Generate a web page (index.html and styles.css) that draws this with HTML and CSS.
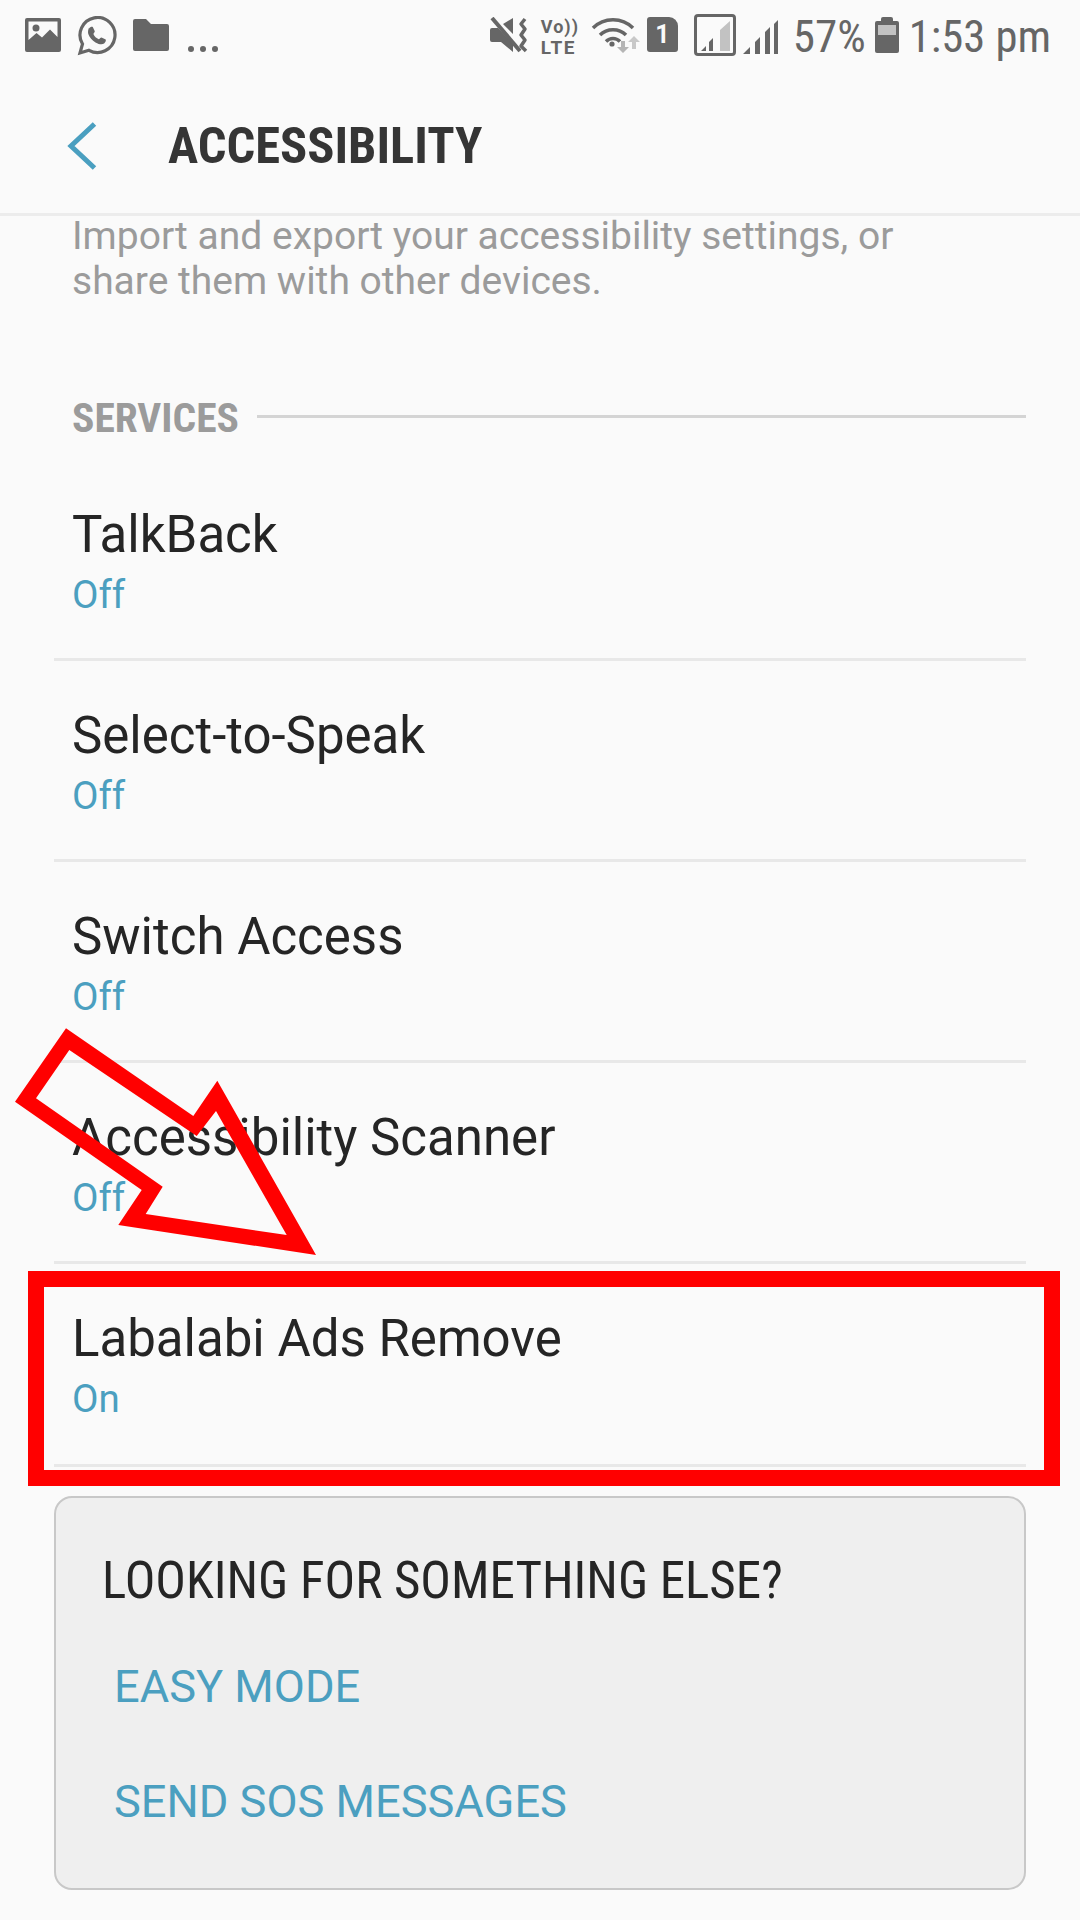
FILE: index.html
```html
<!DOCTYPE html>
<html lang="en">
<head>
  <meta charset="UTF-8">
  <meta name="viewport" content="width=device-width, initial-scale=1.0">
  <title>Accessibility</title>
  <link rel="stylesheet" href="styles.css">
</head>
<body>
  <div class="phone">

    <!-- Status bar -->
    <div class="status-bar">
      <div class="status-left">
        <svg class="ic-image" width="36" height="34" viewBox="0 0 36 34">
          <path fill="#666" fill-rule="evenodd" d="M2 0h32a2 2 0 0 1 2 2v30a2 2 0 0 1-2 2H2a2 2 0 0 1-2-2V2a2 2 0 0 1 2-2zM3.500 3.500V22l8-7 5.500 4.500 8-8 7.500 7.500V3.500z"/>
          <circle cx="11" cy="10" r="3.500" fill="#666"/>
        </svg>
        <svg class="ic-whatsapp" width="40" height="40" viewBox="0 0 40 40">
          <path fill="none" stroke="#666" stroke-width="3.200" d="M3 37l2.500-9A17.500 17.500 0 1 1 12 34.300z"/>
          <path fill="#666" d="M12 12.500c1-1.600 2.800-2.200 3.800-1.600l2 4.300c.2.600-1.400 2.300-1.400 2.800 1 2.300 3 4.300 5.400 5.300.6 0 2-1.900 2.700-1.700l4.200 2c.6.800-.3 3-1.600 3.900-2 1.300-5 .9-8.600-1.100-3.300-2-6-5-7.200-8.400-.6-2-.2-4.400.7-6.300z"/>
        </svg>
        <svg class="ic-folder" width="36" height="32" viewBox="0 0 36 32">
          <path fill="#666" d="M2 0h11l5 5h16a2 2 0 0 1 2 2v23a2 2 0 0 1-2 2H2a2 2 0 0 1-2-2V2a2 2 0 0 1 2-2z"/>
        </svg>
        <div class="more-dots"><span></span><span></span><span></span></div>
      </div>
      <div class="status-right">
        <svg class="ic-mute" width="38" height="36" viewBox="0 0 38 36">
          <path fill="#666" d="M0 13a2 2 0 0 1 2-2h6l15 16v8L11 25H2a2 2 0 0 1-2-2zM13 7l10-6v16z"/>
          <path fill="none" stroke="#666" stroke-width="4" d="M2 1l28 33"/>
          <path fill="none" stroke="#666" stroke-width="3.500" stroke-linejoin="round" d="M35 2l-4 5 4 5-4 6 4 5-4 6 5 5"/>
        </svg>
        <div class="volte"><span class="volte-top">Vo))</span><span class="volte-bottom">LTE</span></div>
        <svg class="ic-wifi" width="50" height="38" viewBox="0 0 50 38">
          <g fill="none" stroke="#666" stroke-width="3.500">
            <path d="M2 11c11-11 29-11 40 0"/>
            <path d="M9 18c7-7 19-7 26 0"/>
            <path d="M15 24.500c4-4 10-4 14 0"/>
          </g>
          <circle cx="21" cy="27" r="2.600" fill="#666"/>
          <path fill="#b5b5b5" d="M30 24h4v6h4l-6 6-6-6h4z"/>
          <path fill="#c8c8c8" d="M43 19l6 6h-4v7h-4v-7h-4z"/>
        </svg>
        <div class="sim-card">1</div>
        <svg class="ic-signal-box" width="42" height="42" viewBox="0 0 42 42">
          <rect x="1.500" y="1.500" width="39" height="39" rx="2.500" fill="none" stroke="#666" stroke-width="3"/>
          <path fill="#c2c2c2" d="M26 16L36 7v30H26z"/>
          <path fill="#666" d="M7 37l5-5v5zM15 37v-9l4-4v13z"/>
        </svg>
        <svg class="ic-signal" width="36" height="36" viewBox="0 0 36 36">
          <path fill="#666" d="M0 36l7-7v7zM12 36V24l5-5v17zM22 36V14l5-5v27zM31 36V6l4-4v34z"/>
        </svg>
        <span class="battery-text">57%</span>
        <div class="battery"><div class="battery-top"></div></div>
        <span class="clock">1:53 pm</span>
      </div>
    </div>

    <!-- App bar -->
    <div class="app-bar">
      <svg class="back-arrow" width="30" height="48" viewBox="0 0 30 48">
        <path fill="none" stroke="#4a9fc0" stroke-width="5" d="M27.500 2L4 24l23.500 22"/>
      </svg>
      <h1 class="app-title">ACCESSIBILITY</h1>
    </div>

    <!-- Scrolling content -->
    <div class="content">
      <p class="intro">Import and export your accessibility settings, or<br>share them with other devices.</p>

      <div class="section-head">
        <span>SERVICES</span>
        <div class="section-line"></div>
      </div>

      <div class="service-list">
        <div class="service-row">
          <div class="service-name">TalkBack</div>
          <div class="service-state">Off</div>
        </div>
        <div class="service-row">
          <div class="service-name">Select-to-Speak</div>
          <div class="service-state">Off</div>
        </div>
        <div class="service-row">
          <div class="service-name">Switch Access</div>
          <div class="service-state">Off</div>
        </div>
        <div class="service-row">
          <div class="service-name">Accessibility Scanner</div>
          <div class="service-state">Off</div>
        </div>
        <div class="service-row service-row-last">
          <div class="service-name">Labalabi Ads Remove</div>
          <div class="service-state">On</div>
        </div>
      </div>

      <div class="else-card">
        <div class="else-title">LOOKING FOR SOMETHING ELSE?</div>
        <a class="else-link">EASY MODE</a>
        <a class="else-link else-link-next">SEND SOS MESSAGES</a>
      </div>
    </div>

    <!-- Red annotations on top of the screenshot -->
    <svg class="note-arrow" width="330" height="240" viewBox="0 1020 330 240">
      <path fill="#f00" fill-rule="evenodd" d="M66 1028.300L193.300 1116 217.300 1080.700 316 1255 118.300 1225 141.700 1190 15 1101.700zM69.300 1050L36 1098.300 162.700 1186.700 145.700 1214 286.700 1235 216 1111 196.700 1136z"/>
    </svg>
    <div class="note-box"></div>
  </div>
</body>
</html>
```

FILE: styles.css
```css
/* Basic styling */
html, body {
  margin: 0;
  padding: 0;
}

body {
  font-family: Roboto, "Liberation Sans", sans-serif;
  background-color: #fafafa;
  color: #252525;
}

.phone {
  position: relative;
  width: 1080px;
  height: 1920px;
  overflow: hidden;
  background-color: #fafafa;
}

/* Status bar */
.status-bar {
  height: 72px;
  display: flex;
  justify-content: space-between;
  color: #666;
}

.status-left {
  display: flex;
  align-items: flex-start;
  padding: 16px 0 0 25px;
}

.ic-image {
  margin-top: 2px;
}

.ic-whatsapp {
  margin-left: 16px;
}

.ic-folder {
  margin: 3px 0 0 16px;
}

.more-dots {
  display: flex;
  gap: 6px;
  margin: 30px 0 0 19px;
}

.more-dots span {
  width: 6px;
  height: 6px;
  border-radius: 50%;
  background-color: #666;
}

.status-right {
  display: flex;
  align-items: flex-start;
  padding: 14px 29px 0 0;
}

.ic-mute {
  margin-top: 3px;
}

.volte {
  display: flex;
  flex-direction: column;
  margin: 2px 0 0 13px;
  width: 36px;
  font-weight: 700;
}

.volte-top {
  font-size: 18px;
  line-height: 21px;
  letter-spacing: 1px;
}

.volte-bottom {
  font-size: 19px;
  line-height: 21px;
  letter-spacing: 1.500px;
}

.ic-wifi {
  margin: 3px 0 0 14px;
}

.sim-card {
  width: 31px;
  height: 35px;
  margin: 3px 0 0 6px;
  border-radius: 3px 9px 3px 3px;
  background-color: #666;
  color: #fafafa;
  font-size: 25px;
  font-weight: 700;
  line-height: 35px;
  text-align: center;
}

.ic-signal-box {
  margin-left: 16px;
}

.ic-signal {
  margin: 4px 0 0 7px;
}

.battery-text {
  margin: 1px 0 0 14px;
  font-size: 45px;
  line-height: 44px;
  font-stretch: 75%;
}

.battery {
  position: relative;
  width: 24px;
  height: 32px;
  margin: 7px 0 0 9px;
  border-radius: 2px;
  background-color: #666;
  padding: 4px 3px 0;
  box-sizing: border-box;
}

/* nub of the battery */
.battery::before {
  content: "";
  position: absolute;
  left: 6px;
  top: -4px;
  width: 12px;
  height: 4px;
  border-radius: 2px 2px 0 0;
  background-color: #666;
}

.battery-top {
  height: 10px;
  background-color: #c2c2c2;
}

.clock {
  margin: 1px 0 0 10px;
  font-size: 44.600px;
  line-height: 44px;
  font-stretch: 75%;
}

/* App bar */
.app-bar {
  height: 144px;
  box-sizing: border-box;
  display: flex;
  align-items: center;
  padding: 6px 0 0 67px;
  border-bottom: 3px solid #ececec;
}

.back-arrow {
  flex: none;
}

.app-title {
  margin: 0 0 0 71px;
  font-size: 50.5px;
  font-weight: 700;
  font-stretch: 75%;
  color: #353535;
}

/* Content */
.content {
  padding: 0 54px;
}

.intro {
  margin: -2px 0 0;
  padding-left: 18px;
  font-size: 39px;
  line-height: 45px;
  color: #9b9b9b;
}

.section-head {
  display: flex;
  align-items: center;
  margin: 89px 0 18px;
  padding-left: 18px;
  font-size: 41.500px;
  font-weight: 700;
  font-stretch: 75%;
  color: #9b9b9b;
}

.section-line {
  flex: 1;
  height: 3px;
  margin: 0 0 3px 18px;
  background-color: #d4d4d4;
}

.service-row {
  height: 201px;
  box-sizing: border-box;
  padding: 42px 0 0 18px;
  border-bottom: 3px solid #e8e8e8;
}

.service-row-last {
  height: 203px;
}

.service-name {
  font-size: 51px;
  line-height: 66px;
}

.service-state {
  margin-top: 5px;
  font-size: 38.500px;
  line-height: 44px;
  color: #4b9fc0;
}

/* Looking for something else card */
.else-card {
  height: 394px;
  box-sizing: border-box;
  margin-top: 29px;
  padding: 51px 0 0 46px;
  border: 2px solid #c8c8c8;
  border-radius: 18px;
  background-color: #efefef;
}

.else-title {
  font-size: 51px;
  line-height: 64px;
  font-stretch: 75%;
}

.else-link {
  display: block;
  margin: 49px 0 0 12px;
  font-size: 45.200px;
  line-height: 50px;
  color: #4b9fc0;
}

.else-link-next {
  margin-top: 65px;
}

/* Annotations */
.note-arrow {
  position: absolute;
  left: 0;
  top: 1020px;
}

.note-box {
  position: absolute;
  left: 28px;
  top: 1271px;
  width: 1032px;
  height: 215px;
  box-sizing: border-box;
  border: 16px solid #f00;
}
```
